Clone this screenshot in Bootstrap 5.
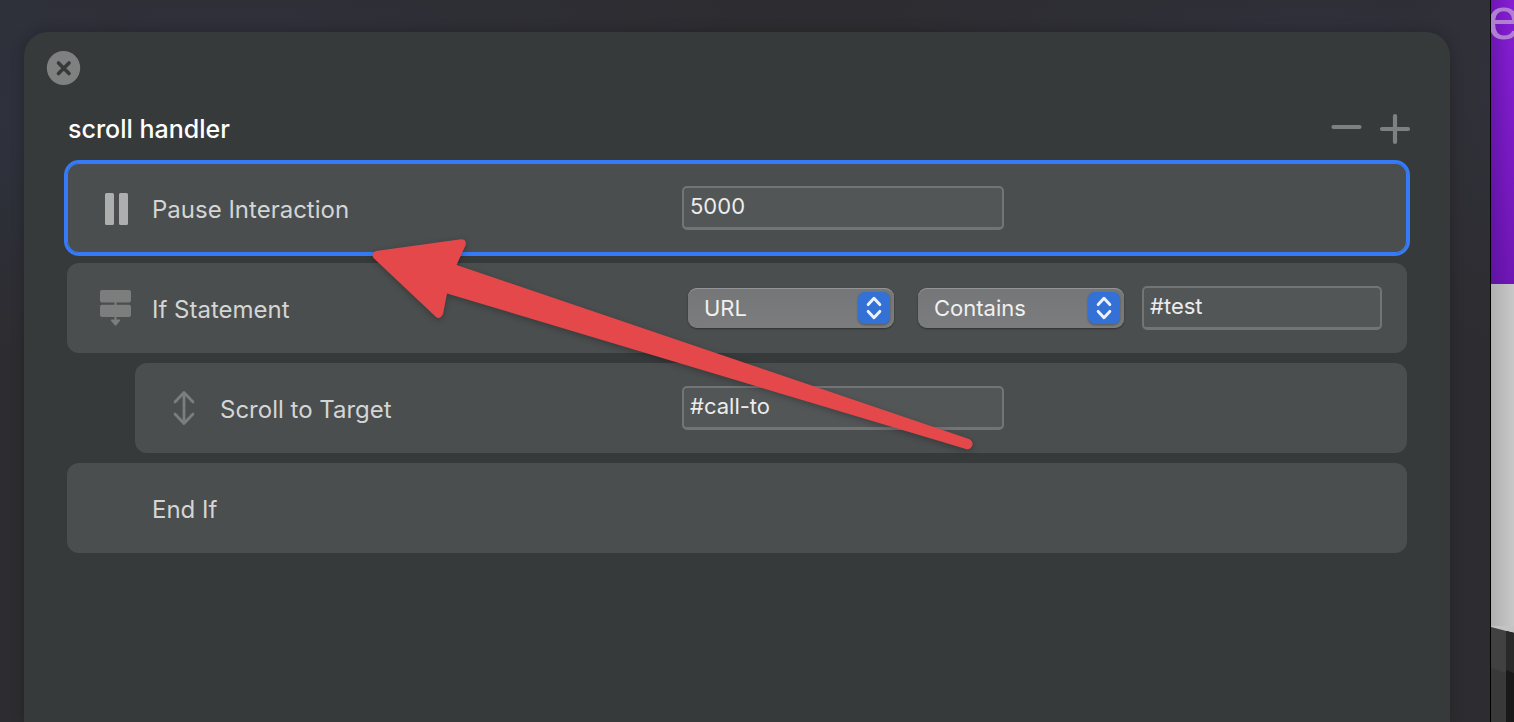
<!DOCTYPE html>
<html lang="en">
<head>
<meta charset="utf-8">
<meta name="viewport" content="width=device-width, initial-scale=1">
<title>scroll handler</title>
<link href="https://cdn.jsdelivr.net/npm/bootstrap@5.3.0/dist/css/bootstrap.min.css" rel="stylesheet">
<style>
  body { font-family: Inter, "Liberation Sans", sans-serif; font-size: 24px; line-height: 32px; background: #2d2c30; color: #d4d5d5; }
  .backdrop { padding: 32px 40px 0 24px; border-right: 1px solid #000;
    background: radial-gradient(ellipse 120px 260px at 0 110px, #2e323d, transparent),
      radial-gradient(ellipse 90px 260px at 100% 90px, #30313a, transparent),
      radial-gradient(ellipse 560px 70px at 15% 20px, #2f303a, transparent),
      radial-gradient(ellipse 460px 70px at 88% 24px, #2f303a, transparent), #2d2c30; }
  .sheet { background: #373a3a; border-radius: 24px 24px 0 0; padding: 16px 43px 0; box-shadow: 0 0 14px rgba(0,0,0,.22); }
  .icon-btn { background: none; border: 0; padding: 0; line-height: 0; color: #7f8080; }
  .close-btn { margin-left: -22px; }
  .sheet-head { margin: 25px -4px 18px 1px; }
  .sheet-title { font-size: 25px; line-height: 32px; font-weight: 500; color: #fff; }
  .steps { gap: 10px; }
  .step { background: #4b4e4e; border-radius: 12px; height: 90px; }
  .step.selected { box-shadow: 0 0 0 3px #357af6, inset 0 0 0 1px #357af6; }
  .step.nested { margin-left: 68px; }
  .step-icon { width: 85px; padding-left: 32px; color: #7c7d7d; line-height: 0; }
  .step-name { padding-top: 4px; }
  .controls { flex: 0 0 725px; }
  .field { width: 322px; height: 44px; padding: 0 6px 4px; font-size: 22px; color: #ececec; background: #535657; border: 2px solid #727475; border-bottom-width: 3px; border-radius: 5px; outline: 0; }
  .field-narrow { width: 240px; }
  .popup { width: 206px; margin-right: 24px; }
  .popup:first-child { margin-left: 6px; }
  .popup + .field { margin-left: -6px; }
  .popup select { width: 100%; height: 40px; padding: 0 48px 0 16px; font-size: 22px; color: #f0f0f0; appearance: none; border: 0; border-radius: 9px; outline: 0;
    background: linear-gradient(#757677, #7b7c7d); box-shadow: inset 0 1px 0 #939495, 0 1px 2px rgba(0,0,0,.4); }
  .popup svg { right: 4px; top: 4px; pointer-events: none; filter: drop-shadow(0 1px 1px rgba(0,0,0,.3)); }
  .neighbour { width: 23px; color: #b07fd2; background: #c3c3c3; }
  .hero { height: 284px; flex: none; font-family: "Liberation Sans", sans-serif; font-size: 60px; line-height: 38px; text-indent: -4px; background: linear-gradient(90deg, rgba(70,15,130,.4), transparent 80%), linear-gradient(#851dd3, #6f16b5); }
  .page-part { background: linear-gradient(90deg, #b0b0b0, #c8c8c8); }
  .pointer { left: 368px; top: 234px; pointer-events: none; filter: drop-shadow(0 2px 3px rgba(0,0,0,.25)); }
</style>
</head>
<body>
<div class="d-flex vh-100 overflow-hidden position-relative">
  <main class="backdrop flex-grow-1 d-flex">
    <section class="sheet flex-grow-1">
      <button class="icon-btn close-btn" type="button" aria-label="Close">
        <svg width="38" height="40" viewBox="0 0 38 40"><ellipse cx="18.500" cy="20" rx="16.700" ry="17" fill="#7f8080"/><path d="M13.500 15l10.500 10.500M24 15l-10.500 10.500" stroke="#373a3a" stroke-width="3.600" stroke-linecap="round"/></svg>
      </button>
      <header class="sheet-head d-flex align-items-center justify-content-between">
        <h1 class="sheet-title mb-0">scroll handler</h1>
        <div class="d-flex gap-3">
          <button class="icon-btn" type="button" aria-label="Remove step"><svg width="32" height="32" viewBox="0 0 32 32"><path d="M2.500 14h26" stroke="currentColor" stroke-width="4.200" stroke-linecap="round"/></svg></button>
          <button class="icon-btn" type="button" aria-label="Add step"><svg width="32" height="32" viewBox="0 0 32 32"><path d="M3 16h26M16 3v26" stroke="currentColor" stroke-width="4.200" stroke-linecap="round"/></svg></button>
        </div>
      </header>
      <div class="d-flex flex-column steps">
        <div class="step selected d-flex align-items-center">
          <span class="step-icon"><svg width="34" height="40" viewBox="0 0 34 40"><path fill="#adaeae" d="M7.500 5h6q1.500 0 1.500 1.500v29q0 1.500-1.500 1.500h-6q-1.500 0-1.500-1.500v-29q0-1.500 1.500-1.500zM21.500 5h6q1.500 0 1.500 1.500v29q0 1.500-1.500 1.500h-6q-1.500 0-1.500-1.500v-29q0-1.500 1.500-1.500z"/></svg></span>
          <label class="step-name flex-grow-1" for="pause">Pause Interaction</label>
          <div class="controls d-flex align-items-center"><input class="field" id="pause" type="text" value="5000"></div>
        </div>
        <div class="step d-flex align-items-center">
          <span class="step-icon"><svg width="34" height="40" viewBox="0 0 34 40"><g fill="currentColor"><rect x="1" y="2" width="31" height="12.500" rx="2"/><rect x="1" y="16.800" width="31" height="12.300" rx="2"/><path d="M15.500 14h2v3h-2zM15.500 29h2v2.500h3.200q1 .2.300 1.200l-3.700 4.600q-.8.900-1.600 0l-3.700-4.600q-.7-1 .300-1.200h3.200z"/></g></svg></span>
          <label class="step-name flex-grow-1" for="subject">If Statement</label>
          <div class="controls d-flex align-items-center">
            <div class="popup position-relative d-flex">
              <select id="subject"><option>URL</option></select>
              <svg class="position-absolute" width="32" height="32" viewBox="0 0 33 33"><rect width="33" height="33" rx="7" fill="#3471d6"/><path d="M10.500 13l6-6.500 6 6.500M10.500 20l6 6.500 6-6.500" fill="none" stroke="#edf2fb" stroke-width="3" stroke-linecap="round" stroke-linejoin="round"/></svg>
            </div>
            <div class="popup position-relative d-flex">
              <select aria-label="Comparison"><option>Contains</option></select>
              <svg class="position-absolute" width="32" height="32" viewBox="0 0 33 33"><rect width="33" height="33" rx="7" fill="#3471d6"/><path d="M10.500 13l6-6.500 6 6.500M10.500 20l6 6.500 6-6.500" fill="none" stroke="#edf2fb" stroke-width="3" stroke-linecap="round" stroke-linejoin="round"/></svg>
            </div>
            <input class="field field-narrow" type="text" aria-label="Value" value="#test">
          </div>
        </div>
        <div class="step nested d-flex align-items-center">
          <span class="step-icon"><svg width="34" height="40" viewBox="0 0 34 40"><path d="M17 5v30M8 14l9-9.500 9 9.500M8 26l9 9.500 9-9.500" fill="none" stroke="currentColor" stroke-width="2.800" stroke-linecap="round" stroke-linejoin="round"/></svg></span>
          <label class="step-name flex-grow-1" for="target">Scroll to Target</label>
          <div class="controls d-flex align-items-center"><input class="field" id="target" type="text" value="#call-to"></div>
        </div>
        <div class="step d-flex align-items-center">
          <span class="step-icon"></span>
          <span class="step-name">End If</span>
        </div>
      </div>
    </section>
  </main>
  <aside class="neighbour flex-shrink-0 d-flex flex-column overflow-hidden">
    <div class="hero">e</div>
    <div class="page-part flex-grow-1"></div>
    <svg class="flex-shrink-0" width="23" height="96" viewBox="0 0 23 96"><path d="M0 0h23v96H0z" fill="#c3c3c3"/><path d="M0 1l23 6v89H0z" fill="#414141"/><path d="M0 42l15 5v49H0z" fill="#393939"/><path d="M15 5l8 2v89h-8z" fill="#191919"/><path d="M15 5l8 2v40l-8-3z" fill="#292929"/></svg>
  </aside>
  <svg class="pointer position-absolute" width="612" height="222" viewBox="368 234 612 222" aria-hidden="true"><path d="M376 251L461 239.300Q467 239.500 465.500 245.500L456.500 265L969 439Q974 442 972 446Q970 450 966 449L447 293.500L443 314Q440 320 436 317L373.500 258Q371 253 376 251Z" fill="#e5484b"/></svg>
</div>
<script src="https://cdn.jsdelivr.net/npm/bootstrap@5.3.0/dist/js/bootstrap.bundle.min.js"></script>
</body>
</html>
